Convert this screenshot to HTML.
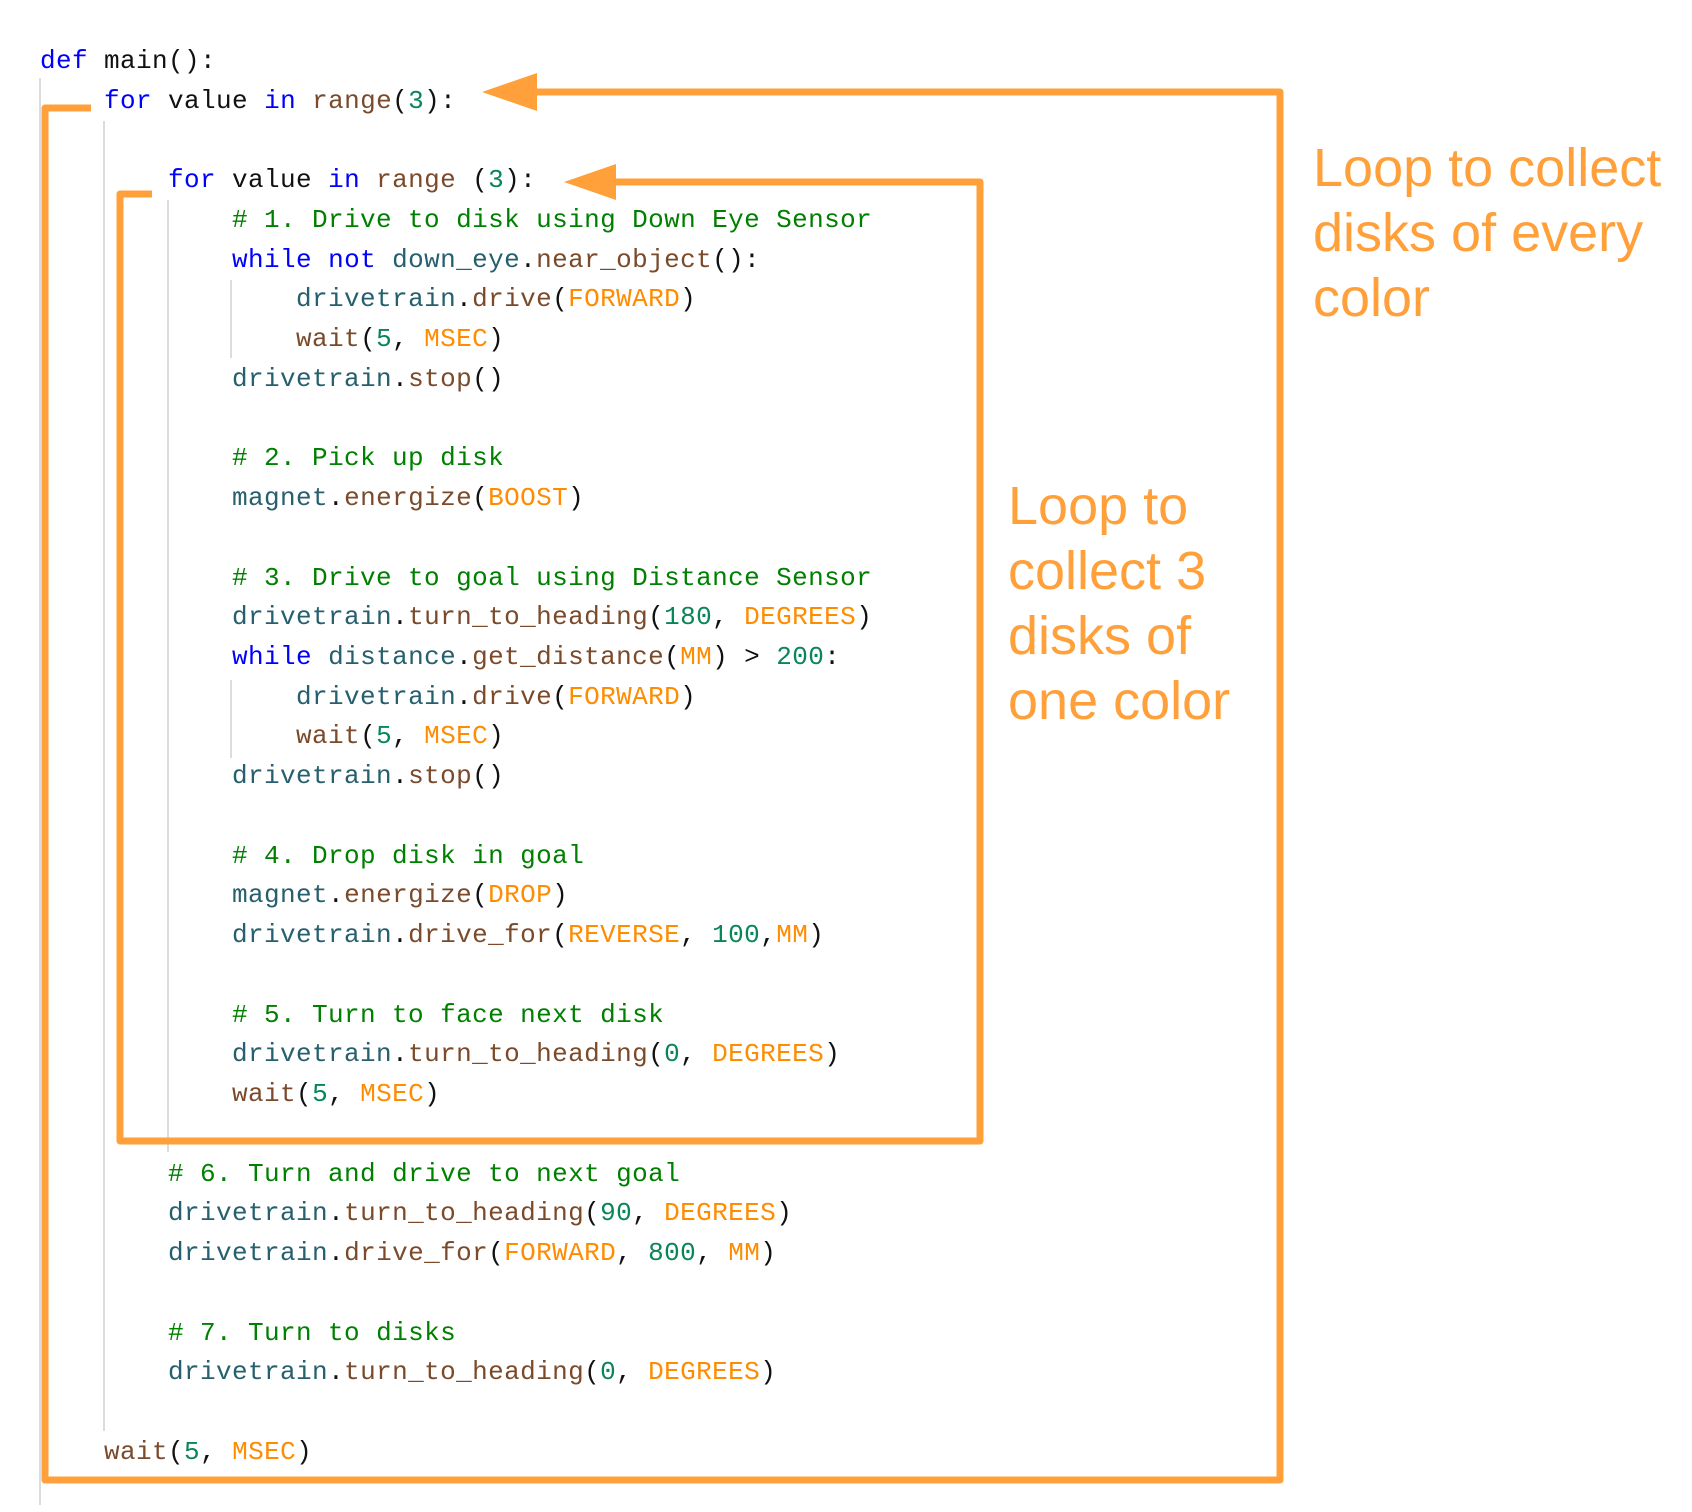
<!DOCTYPE html>
<html><head><meta charset="utf-8"><style>
html,body{margin:0;padding:0;background:#fff;width:1692px;height:1512px;overflow:hidden}
pre{position:absolute;left:40px;top:42px;margin:0;font-family:"Liberation Mono","DejaVu Sans Mono",monospace;font-size:26px;letter-spacing:0.4px;line-height:39.73px;color:#111}
.k{color:#0000ff}.f{color:#7a4a2b}.n{color:#098658}.c{color:#ff8c00}.o{color:#265f6e}.g{color:#008000}
.lbl{position:absolute;font-family:"Liberation Sans",sans-serif;font-size:54px;color:#ffa03a;line-height:65px}
svg{position:absolute;left:0;top:0}
</style></head><body>
<svg width="1692" height="1512">
<g stroke="#d0d0d0" stroke-width="1.5">
<line x1="40" y1="78" x2="40" y2="1505"/>
<line x1="104" y1="121" x2="104" y2="1431"/>
<line x1="168" y1="200" x2="168" y2="1152"/>
<line x1="231" y1="280" x2="231" y2="358"/>
<line x1="231" y1="680" x2="231" y2="758"/>
</g>
<g stroke="#ffa03a" stroke-width="7" fill="none" stroke-linejoin="round">
<polyline points="91,108 45,108 45,1480 1280,1480 1280,92 530,92"/>
<polyline points="152,194 120,194 120,1141 980,1141 980,182 610,182"/>
</g>
<g fill="#ffa03a">
<polygon points="482,92 537,73 537,111"/>
<polygon points="564,182 616,164 616,200"/>
</g>
</svg>
<pre><span class="k">def</span> main():
    <span class="k">for</span> value <span class="k">in</span> <span class="f">range</span>(<span class="n">3</span>):

        <span class="k">for</span> value <span class="k">in</span> <span class="f">range</span> (<span class="n">3</span>):
            <span class="g"># 1. Drive to disk using Down Eye Sensor</span>
            <span class="k">while</span> <span class="k">not</span> <span class="o">down_eye</span>.<span class="f">near_object</span>():
                <span class="o">drivetrain</span>.<span class="f">drive</span>(<span class="c">FORWARD</span>)
                <span class="f">wait</span>(<span class="n">5</span>, <span class="c">MSEC</span>)
            <span class="o">drivetrain</span>.<span class="f">stop</span>()

            <span class="g"># 2. Pick up disk</span>
            <span class="o">magnet</span>.<span class="f">energize</span>(<span class="c">BOOST</span>)

            <span class="g"># 3. Drive to goal using Distance Sensor</span>
            <span class="o">drivetrain</span>.<span class="f">turn_to_heading</span>(<span class="n">180</span>, <span class="c">DEGREES</span>)
            <span class="k">while</span> <span class="o">distance</span>.<span class="f">get_distance</span>(<span class="c">MM</span>) &gt; <span class="n">200</span>:
                <span class="o">drivetrain</span>.<span class="f">drive</span>(<span class="c">FORWARD</span>)
                <span class="f">wait</span>(<span class="n">5</span>, <span class="c">MSEC</span>)
            <span class="o">drivetrain</span>.<span class="f">stop</span>()

            <span class="g"># 4. Drop disk in goal</span>
            <span class="o">magnet</span>.<span class="f">energize</span>(<span class="c">DROP</span>)
            <span class="o">drivetrain</span>.<span class="f">drive_for</span>(<span class="c">REVERSE</span>, <span class="n">100</span>,<span class="c">MM</span>)

            <span class="g"># 5. Turn to face next disk</span>
            <span class="o">drivetrain</span>.<span class="f">turn_to_heading</span>(<span class="n">0</span>, <span class="c">DEGREES</span>)
            <span class="f">wait</span>(<span class="n">5</span>, <span class="c">MSEC</span>)

        <span class="g"># 6. Turn and drive to next goal</span>
        <span class="o">drivetrain</span>.<span class="f">turn_to_heading</span>(<span class="n">90</span>, <span class="c">DEGREES</span>)
        <span class="o">drivetrain</span>.<span class="f">drive_for</span>(<span class="c">FORWARD</span>, <span class="n">800</span>, <span class="c">MM</span>)

        <span class="g"># 7. Turn to disks</span>
        <span class="o">drivetrain</span>.<span class="f">turn_to_heading</span>(<span class="n">0</span>, <span class="c">DEGREES</span>)

    <span class="f">wait</span>(<span class="n">5</span>, <span class="c">MSEC</span>)</pre>
<div class="lbl" style="left:1313px;top:136px">Loop to collect<br>disks of every<br>color</div>
<div class="lbl" style="left:1008px;top:474px">Loop to<br>collect 3<br>disks of<br>one color</div>
</body></html>
